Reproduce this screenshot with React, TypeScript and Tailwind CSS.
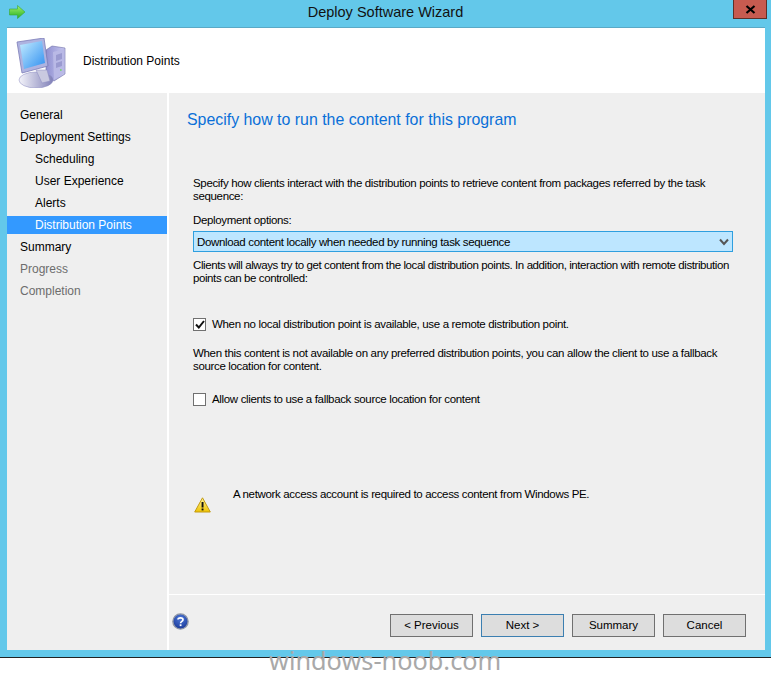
const ui = { fontFamily: '"Liberation Sans", sans-serif' };

function Computer() {
  return (
    <svg width="50" height="50" viewBox="0 0 50 50">
      <defs>
        <linearGradient id="scr" x1="0" y1="0" x2="1" y2="1"><stop offset="0" stopColor="#c4ecff" /><stop offset="1" stopColor="#2f8ff0" /></linearGradient>
        <linearGradient id="tower" x1="0" y1="0" x2="1" y2="0"><stop offset="0" stopColor="#8f8fd0" /><stop offset="1" stopColor="#c8c8f0" /></linearGradient>
        <linearGradient id="base" x1="0" y1="0" x2="1" y2="0"><stop offset="0" stopColor="#f4f4fa" /><stop offset="1" stopColor="#8080b8" /></linearGradient>
      </defs>
      <path d="M30 12 L36 8 L49 10 L49 36 L38 43 L30 38 Z" fill="url(#tower)" stroke="#6f6fa8" strokeWidth="0.6" />
      <path d="M37 14 L48 11 L48 35 L38 42 Z" fill="#b9b9e6" />
      <path d="M40 17 L46 15 V21 L40 23 Z M40 25 L46 23 V28 L40 30 Z" fill="#9a9ad0" />
      <rect x="44" y="31" width="1.6" height="2" fill="#7ed07e" />
      <ellipse cx="20" cy="42" rx="17" ry="8" fill="url(#base)" stroke="#8a8ac0" strokeWidth="0.5" />
      <path d="M20 32 L31 32 L34 43 L26 45 Z" fill="#c9c9e0" stroke="#8a8ac0" strokeWidth="0.5" />
      <path d="M1 4 L28 0 L32 28 L6 35 Z" fill="#aeb3e0" stroke="#7c7cb8" strokeWidth="0.8" />
      <path d="M4 7 L26 3 L29 25 L8 31 Z" fill="url(#scr)" />
    </svg>
  );
}

function Help() {
  return (
    <svg width="17" height="17" viewBox="0 0 17 17">
      <defs><radialGradient id="h" cx="0.5" cy="0.3" r="0.8"><stop offset="0" stopColor="#4d78d8" /><stop offset="1" stopColor="#13308f" /></radialGradient></defs>
      <circle cx="8.5" cy="8.5" r="7.6" fill="url(#h)" stroke="#8e96a6" strokeWidth="1.4" />
      <path d="M6 6.6 C6 4.4 11 4.2 11 6.8 C11 8.4 8.6 8.4 8.6 10.2" fill="none" stroke="#fff" strokeWidth="1.7" />
      <rect x="7.7" y="11.3" width="1.8" height="1.8" fill="#fff" />
    </svg>
  );
}

function Warn() {
  return (
    <svg width="17" height="16" viewBox="0 0 17 16">
      <defs><linearGradient id="w" x1="0" y1="0" x2="0" y2="1"><stop offset="0" stopColor="#fff3a0" /><stop offset="1" stopColor="#f0c400" /></linearGradient></defs>
      <path d="M8.5 0.8 L16.3 15 L0.7 15 Z" fill="url(#w)" stroke="#c29a10" strokeLinejoin="round" />
      <rect x="7.6" y="5" width="1.9" height="5.5" fill="#111" />
      <rect x="7.6" y="11.5" width="1.9" height="1.9" fill="#111" />
    </svg>
  );
}

function Arrow() {
  return (
    <svg width="17" height="14" viewBox="0 0 17 14">
      <defs><linearGradient id="a" x1="0" y1="0" x2="0" y2="1"><stop offset="0" stopColor="#a4f06a" /><stop offset="1" stopColor="#22b022" /></linearGradient></defs>
      <path d="M0.5 4 H8.5 V0.5 L16 7 L8.5 13.5 V10 H0.5 Z" fill="url(#a)" stroke="#38a838" strokeWidth="0.6" />
    </svg>
  );
}

function NavItem({ label, sub, active, muted }: { label: string; sub?: boolean; active?: boolean; muted?: boolean }) {
  return (
    <div
      className={`h-[18px] mb-[4px] flex items-center text-[12px] ${sub ? "pl-[28px]" : "pl-[13px]"} ${active ? "bg-[#3399ff] text-white" : muted ? "text-[#6d6d6d]" : "text-black"}`}
    >
      {label}
    </div>
  );
}

function Btn({ label, focus }: { label: string; focus?: boolean }) {
  return (
    <div className={`w-[83px] h-[23px] flex items-center justify-center bg-[#dddddd] border text-[11.5px] text-black ${focus ? "border-[#3c7fb1]" : "border-[#707070]"}`}>
      {label}
    </div>
  );
}

export default function App() {
  return (
    <div className="relative w-[771px] h-[675px] bg-white overflow-hidden" style={ui}>
      <div className="h-[658px] bg-[#63c8ea] border-b border-[#222222] flex flex-col">
        <div className="h-[27px] relative flex items-center justify-center text-[14.5px] text-[#111111] shrink-0">
          <div className="absolute left-[9px] top-[5px]"><Arrow /></div>
          <span className="-mt-[2px]">Deploy Software Wizard</span>
          <div className="absolute right-[4px] top-0 w-[34px] h-[19px] bg-[#c75b50] border border-[#5e3028] border-t-0 flex items-center justify-center">
            <svg width="11" height="9" viewBox="0 0 11 9"><path d="M1.5 1 L9.5 8 M9.5 1 L1.5 8" stroke="#000" strokeWidth="2.2" /></svg>
          </div>
        </div>
        <div className="mx-[7px] mr-[6px] h-[623px] flex flex-col border-t border-[#5aa9c6] bg-[#efefef]">
          <div className="h-[65px] bg-white flex items-center shrink-0">
            <div className="ml-[9px] mt-[4px]"><Computer /></div>
            <span className="ml-[17px] text-[12px] text-black mt-[1px]">Distribution Points</span>
          </div>
          <div className="flex flex-1 min-h-0">
            <div className="w-[160px] pt-[13px] shrink-0">
              <NavItem label="General" />
              <NavItem label="Deployment Settings" />
              <NavItem label="Scheduling" sub />
              <NavItem label="User Experience" sub />
              <NavItem label="Alerts" sub />
              <NavItem label="Distribution Points" sub active />
              <NavItem label="Summary" />
              <NavItem label="Progress" muted />
              <NavItem label="Completion" muted />
            </div>
            <div className="w-[2px] bg-white shrink-0" />
            <div className="flex-1 flex flex-col">
              <div className="h-[502px] pl-[18px] pr-[30px] text-[11.5px] tracking-[-0.34px] leading-[13px] text-black border-b border-white">
                <div className="pt-[15px] text-[15.9px] tracking-normal leading-[24px] text-[#0a6fd8]">Specify how to run the content for this program</div>
                <div className="ml-[6px] mt-[45px] w-[540px] whitespace-nowrap">
                  Specify how clients interact with the distribution points to retrieve content from packages referred by the task<br />sequence:
                </div>
                <div className="ml-[6px] mt-[11px]">Deployment options:</div>
                <div className="ml-[6px] mt-[4px] w-[540px] h-[21px] bg-[#bde6ff] border border-[#2f9fdf] flex items-center justify-between pl-[3px] pr-[3px]">
                  <span className="mt-[1px]">Download content locally when needed by running task sequence</span>
                  <svg width="10" height="8" viewBox="0 0 10 8"><path d="M1 1.5 L5 6 L9 1.5" fill="none" stroke="#555" strokeWidth="2" /></svg>
                </div>
                <div className="ml-[6px] mt-[7px] w-[540px] whitespace-nowrap tracking-[-0.41px]">
                  Clients will always try to get content from the local distribution points. In addition, interaction with remote distribution<br />points can be controlled:
                </div>
                <div className="ml-[6px] mt-[33px] flex items-center gap-[6px] h-[13px]">
                  <div className="w-[13px] h-[13px] border border-[#707070] bg-white flex items-center justify-center">
                    <svg width="10" height="9" viewBox="0 0 10 9"><path d="M1 4.5 L3.8 7.5 L9 1" fill="none" stroke="#111" strokeWidth="2" /></svg>
                  </div>
                  <span>When no local distribution point is available, use a remote distribution point.</span>
                </div>
                <div className="ml-[6px] mt-[16px] w-[540px] whitespace-nowrap">
                  When this content is not available on any preferred distribution points, you can allow the client to use a fallback<br />source location for content.
                </div>
                <div className="ml-[6px] mt-[20px] flex items-center gap-[6px] h-[13px]">
                  <div className="w-[13px] h-[13px] border border-[#707070] bg-white" />
                  <span>Allow clients to use a fallback source location for content</span>
                </div>
                <div className="ml-[7px] mt-[82px] flex items-start">
                  <div className="mt-[9px] w-[17px]"><Warn /></div>
                  <span className="ml-[22px]">A network access account is required to access content from Windows PE.</span>
                </div>
              </div>
              <div className="flex-1 relative flex justify-end items-start pt-[19px] pr-[19px] gap-[8px]">
                <div className="absolute left-[3px] top-[18px]"><Help /></div>
                <Btn label="< Previous" />
                <Btn label="Next >" focus />
                <Btn label="Summary" />
                <Btn label="Cancel" />
              </div>
            </div>
          </div>
        </div>
      </div>
      <div className="absolute left-[269px] top-[647px] text-[25.3px] leading-[26px] text-[#a9a9a9]" style={{ fontFamily: '"Noto Sans", sans-serif' }}>windows-noob.com</div>
    </div>
  );
}
